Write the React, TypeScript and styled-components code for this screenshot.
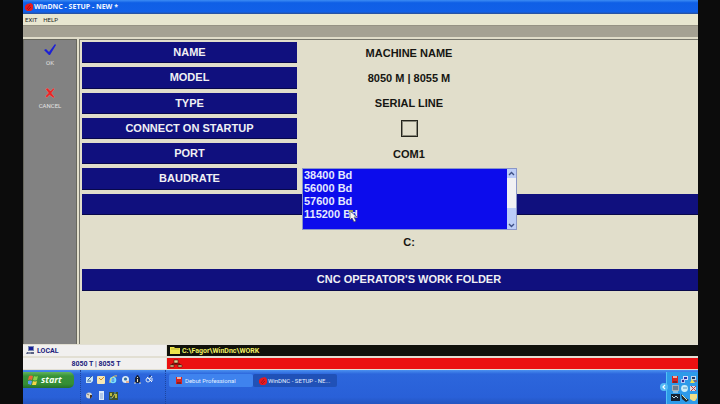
import React from "react";
import styled, { createGlobalStyle } from "styled-components";

const Global = createGlobalStyle`
  * { box-sizing: border-box; }
  html, body, #root { height: 100%; margin: 0; }
  body { background: #0c0c0c; font-family: "Liberation Sans", Arial, sans-serif; overflow: hidden; }
  button, input, select { font: inherit; margin: 0; }
  button { border: 0; padding: 0; background: none; color: inherit; }
  svg { display: block; flex: none; }
`;

const uiFont = `Roboto, "Liberation Sans", sans-serif`;

const Screen = styled.div`
  height: 100%;
  min-height: 400px;
  margin: 0 22px 0 23px;
  display: flex;
  flex-direction: column;
  background: #e1decb;
`;
const TitleBar = styled.header`
  height: 14px;
  flex: none;
  display: flex;
  align-items: center;
  gap: 1px;
  padding-left: 2px;
  background: linear-gradient(#3c8cf4, #0f5fe6 20%, #1260e8 85%, #2d4f92);
  color: #f2f6ff;
  font: bold 7px/12px "Noto Sans", sans-serif;
`;
const MenuBar = styled.nav`
  height: 11px;
  flex: none;
  display: flex;
  gap: 6px;
  padding-left: 2px;
  background: #e8e6d0;
  color: #24241e;
  font-family: ${uiFont};
  font-size: 6px;
`;
const MenuItem = styled.button`
  line-height: 9px;
`;
const ToolStrip = styled.div`
  height: 14px;
  flex: none;
  background: #a5a193;
  border-bottom: 2px solid #e0dcc9;
  border-top: 1px solid #969284;
`;
const Main = styled.main`
  flex: 1;
  min-height: 0;
  display: flex;
`;
const Sidebar = styled.aside`
  width: 54px;
  flex: none;
  display: flex;
  flex-direction: column;
  align-items: center;
  gap: 20px;
  padding-top: 4px;
  background: #828282;
  border: 1px solid #68685f;
  border-bottom: 0;
`;
const ToolButton = styled.button`
  display: flex;
  flex-direction: column;
  align-items: center;
  gap: 3px;
  color: #e2e2e2;
  font-family: ${uiFont};
  font-size: 6px;
  line-height: 8px;
`;
const Panel = styled.section`
  flex: 1;
  min-width: 0;
  margin-left: 2px;
  padding: 2px 0 3px 2px;
  border-left: 1px solid #77766c;
  border-top: 1px solid #77766c;
  display: grid;
  grid-template-columns: 215px 224px 1fr;
  grid-template-rows: repeat(12, minmax(0, 1fr));
  gap: 4px 0;
`;
const Caption = styled.div<{ $wide?: boolean }>`
  grid-column: ${p => (p.$wide ? "1 / -1" : "1")};
  display: flex;
  align-items: center;
  justify-content: center;
  padding-left: ${p => (p.$wide ? "38px" : "0")};
  background: #10107e;
  border-bottom: 1px solid #08084a;
  color: #f0f0f4;
  font-weight: bold;
  font-size: 11px;
`;
const Value = styled.div`
  grid-column: 2;
  display: flex;
  align-items: center;
  justify-content: center;
  color: #161612;
  font-weight: bold;
  font-size: 11px;
`;
const Row = styled.div`
  display: contents;
`;
const WorkDrive = styled(Value)`
  grid-row: 8 / 10;
`;
const Folder = styled(Caption)`
  grid-row: 10;
`;
const Check = styled.input`
  appearance: none;
  width: 17px;
  height: 17px;
  border: 1px solid #24241c;
  outline: 1px solid #8b8a7c;
  outline-offset: -2px;
`;
const ListAnchor = styled.div`
  grid-column: 2;
  grid-row: 6;
  position: relative;
`;
const ListBox = styled.div`
  position: absolute;
  z-index: 1;
  inset: 0 4px auto 5px;
  height: 62px;
  display: flex;
  border: 1px solid #8a96c8;
  background: #0c0cec;
`;
const Options = styled.ul`
  flex: 1;
  margin: 0;
  padding: 0 0 0 1px;
  list-style: none;
  color: #e4e8ff;
  font-weight: bold;
  font-size: 11px;
  line-height: 13px;
`;
const Scroll = styled.div`
  width: 9px;
  display: flex;
  flex-direction: column;
  justify-content: space-between;
  background: #f1f1f4;
`;
const ScrollButton = styled.button<{ $tall?: boolean }>`
  height: ${p => (p.$tall ? "21px" : "9px")};
  display: flex;
  align-items: ${p => (p.$tall ? "flex-end" : "center")};
  justify-content: center;
  background: #bccdf8;
`;
const Pointer = styled.svg`
  position: absolute;
  left: 46px;
  top: 41px;
`;
const StatusGrid = styled.footer`
  flex: none;
  display: grid;
  grid-template-columns: 143px 1fr;
  grid-template-rows: 11px 11px;
  gap: 2px 1px;
  padding: 1px 0;
  background: #e2dfd3;
  font-family: ${uiFont};
  font-weight: bold;
  font-size: 7px;
`;
const Status = styled.div<{ $tone: "light" | "black" | "red"; $center?: boolean }>`
  display: flex;
  align-items: center;
  justify-content: ${p => (p.$center ? "center" : "flex-start")};
  gap: 2px;
  padding-left: 3px;
  background: ${p => ({ light: "#f1f0ef", black: "#10110b", red: "#eb1010" })[p.$tone]};
  color: ${p => (p.$tone === "black" ? "#eeee62" : "#20207c")};
`;
const Taskbar = styled.footer`
  height: 34px;
  flex: none;
  display: flex;
  align-items: flex-start;
  background: linear-gradient(#4a90f0, #2c66dc 12%, #2960d8 80%, #2355c0);
`;
const Start = styled.button`
  width: 51px;
  height: 16px;
  margin-top: 2px;
  display: flex;
  align-items: center;
  gap: 3px;
  padding-left: 5px;
  border-radius: 0 5px 5px 0;
  background: linear-gradient(#62b45c, #389339 25%, #358f35 75%, #24702a);
  color: #f4fff0;
  font: italic bold 9px/14px "Open Sans", sans-serif;
`;
const Quick = styled.div`
  width: 86px;
  height: 34px;
  margin-left: 6px;
  padding: 5px 0 0 4px;
  border-left: 1px dotted #1c459f;
  border-right: 1px dotted #1c459f;
  display: grid;
  grid-template-columns: repeat(6, 12px);
  grid-auto-rows: 16px;
  align-content: start;
`;
const Tasks = styled.div`
  flex: 1;
  display: flex;
  padding: 4px 0 0 3px;
`;
const Task = styled.button<{ $active?: boolean }>`
  width: 84px;
  height: 13px;
  display: flex;
  align-items: center;
  gap: 1px;
  padding-left: 6px;
  border-radius: 2px;
  background: ${p => (p.$active ? "#2051b7" : "#3f83ee")};
  color: #e4efff;
  font-family: ${uiFont};
  font-size: 6px;
  white-space: nowrap;
`;
const Tray = styled.div`
  height: 34px;
  display: flex;
  align-items: center;
`;
const TrayToggle = styled.button`
  z-index: 1;
  margin-right: -2px;
`;
const TrayIcons = styled.div`
  height: 32px;
  margin-top: 2px;
  padding: 3px 0 0 4px;
  display: grid;
  grid-template-columns: repeat(3, 9px);
  grid-auto-rows: 9px;
  background: #2d9ae9;
  border-left: 1px solid #53c2f6;
`;

const RedDisc = () => (
  <svg width="8" height="8" viewBox="0 0 8 8">
    <path d="M2 1 6 0l2 2v4L6 8H2L0 6V3z" fill="#e61b20" />
    <path d="M2 6 5 2M3 7l3-3" stroke="#8e0c18" strokeWidth=".7" />
  </svg>
);
const Chevron = ({ up }: { up?: boolean }) => (
  <svg width="7" height="7" viewBox="0 0 7 7">
    <path d={up ? "M1 5 3.5 2.5 6 5" : "M1 2 3.5 4.5 6 2"} fill="none" stroke="#3d4f86" strokeWidth="1.4" />
  </svg>
);

const glyphs: Record<string, React.ReactNode> = {
  desktop: <><path d="M1 2h5l2-1v5L6 8H1z" fill="#c9e6f8" /><path d="m3 5 4-4M2 6h4" stroke="#3b6794" /></>,
  clock: <><rect x="0" y="1" width="8" height="8" rx="1" fill="#f6e6b4" /><path d="m2 3 2 2 3-3" fill="none" stroke="#d38922" /></>,
  ie: <><circle cx="4" cy="5" r="2.5" fill="none" stroke="#7ce3fc" strokeWidth="1.6" /><path d="M2 5h4" stroke="#9ceaff" /><path d="M1 8C0 4 5 0 8 1" fill="none" stroke="#f3cf58" /></>,
  player: <><circle cx="4.5" cy="4.5" r="3.5" fill="#dcebf5" /><circle cx="4.5" cy="4" r="1.6" fill="#39729d" /><path d="M5 6h3v2H5z" fill="#e5b094" /></>,
  figure: <><path d="M2 3 4 0h1l2 3v4l1 1H1l1-1z" fill="#17233c" /><path d="M4 2h1v1H4zM4 4h1v3H4z" fill="#f4e2b5" /><path d="M1 8h2M6 8h2" stroke="#e4e4dd" /></>,
  tools: <><circle cx="3" cy="5" r="2" fill="none" stroke="#d9e6f2" /><path d="m2 2 5 5M7 1 4 5M7 3v3" stroke="#ecf3fa" /><path d="M4 1h2" stroke="#1e315b" /></>,
  speaker: <><circle cx="4" cy="4.5" r="3" fill="#d8d8cf" /><path d="M5 4v4l2-2V4z" fill="#45301f" /><path d="m2 3 2 1" stroke="#877b6b" /></>,
  note: <><path d="M2 0h5v9H2z" fill="#dbeafb" /><path d="M3 3h3M3 5h3M3 7h3" stroke="#668bc5" strokeWidth=".7" /></>,
  paint: <><path d="M0 1h9v8H0z" fill="#3d5130" /><path d="M1 2h2v3H1zM6 3h2v4H6z" fill="#b9b83c" /><path d="m3 7 3-4" stroke="#cfc658" /><path d="M1 7h2M5 2h2" stroke="#55a1c2" /></>,
  cup: <><path d="M1 1h6v7H1z" fill="#d62220" /><path d="M2 1h4v2H2z" fill="#f0b0a0" /><path d="M2 7h4" stroke="#41211f" /></>,
  net: <><path d="M3 1h5v4H3z" fill="#d6ddfb" /><path d="M4 2h3v2H4z" fill="#2830a8" /><path d="M1 4h4v4H1z" fill="#b3c5f2" /><path d="M2 5h2v2H2z" fill="#372887" /></>,
  alert: <><path d="M2 1h5v4H2z" fill="#c4d4e9" /><path d="M3 2h3v2H3z" fill="#1e3b67" /><path d="m1 8 2-4 3 4z" fill="#f3dd4b" /><path d="M5 6h3" stroke="#c0382c" /></>,
  chip: <><path d="M1 1h7v6H1z" fill="#a8b0b7" /><path d="M2 2h5v4H2z" fill="#6d7c8d" /><path d="M2 8h5" stroke="#dfe5e5" /></>,
  globe: <><circle cx="4.5" cy="4.5" r="3.4" fill="#c9eefa" /><path d="M3 4h4" stroke="#5a92b8" /></>,
  cross: <><path d="M1 2h6v5H1z" fill="#ded8df" /><path d="m2 2 5 5M7 2 2 7" stroke="#bc4148" /></>,
  screen: <><path d="M0 1h9v7H0z" fill="#172131" /><path d="m1 3 2 2 2-2 2 2" fill="none" stroke="#b7d5e3" /></>,
  plug: <><path d="m1 1 3 3 5 3-3 2-4-3z" fill="#20292d" /><path d="m2 2 5 5" stroke="#e8e5a4" /></>,
  shield: <path d="M1 1h7v4L6 8H4L1 6z" fill="#f0dc86" />,
};
const Glyph = ({ name }: { name: string }) => (
  <svg width="9" height="9" viewBox="0 0 9 9">{glyphs[name]}</svg>
);

const settings = [
  { name: "NAME", value: "MACHINE NAME" },
  { name: "MODEL", value: "8050 M | 8055 M" },
  { name: "TYPE", value: "SERIAL LINE" },
  { name: "CONNECT ON STARTUP", value: null },
  { name: "PORT", value: "COM1" },
];
const rates = ["38400 Bd", "56000 Bd", "57600 Bd", "115200 Bd"];
const quick = ["desktop", "clock", "ie", "player", "figure", "tools", "speaker", "note", "paint"];
const tray = ["cup", "net", "alert", "chip", "globe", "cross", "screen", "plug", "shield"];

export default function App() {
  return (
    <>
      <Global />
      <Screen>
        <TitleBar><RedDisc />WinDNC - SETUP - NEW *</TitleBar>
        <MenuBar><MenuItem>EXIT</MenuItem><MenuItem>HELP</MenuItem></MenuBar>
        <ToolStrip />
        <Main>
          <Sidebar>
            <ToolButton>
              <svg width="13" height="12" viewBox="0 0 13 12">
                <path d="m0 6 2-1 3 3 6-8 1 1-6 10H5z" fill="#1c20d6" />
              </svg>
              OK
            </ToolButton>
            <ToolButton>
              <svg width="12" height="12" viewBox="0 0 11 12">
                <path d="m1 2 2-1 3 3 3-3 1 1-3 4 3 4-1 1-4-3-3 3-1-2 3-3z" fill="#ea2424" stroke="#f3aaaa" strokeWidth=".3" />
              </svg>
              CANCEL
            </ToolButton>
          </Sidebar>
          <Panel>
            {settings.map(s => (
              <Row key={s.name}>
                <Caption id={s.name.replace(/ /g, "-")}>{s.name}</Caption>
                <Value>{s.value ?? <Check type="checkbox" aria-labelledby="CONNECT-ON-STARTUP" />}</Value>
              </Row>
            ))}
            <Caption id="BAUDRATE">BAUDRATE</Caption>
            <ListAnchor>
              <ListBox>
                <Options role="listbox" aria-labelledby="BAUDRATE">
                  {rates.map(r => <li key={r} role="option" aria-selected="true">{r}</li>)}
                </Options>
                <Scroll>
                  <ScrollButton aria-label="Scroll up"><Chevron up /></ScrollButton>
                  <ScrollButton $tall aria-label="Scroll down"><Chevron /></ScrollButton>
                </Scroll>
                <Pointer width="9" height="13" viewBox="0 0 9 13">
                  <path d="M1 1v9l2-2 2 4 2-1-2-4h3z" fill="#f5f5f5" stroke="#33334c" strokeWidth=".6" />
                  <path d="M0 0h4v2H0z" fill="#9b985c" />
                </Pointer>
              </ListBox>
            </ListAnchor>
            <Caption $wide />
            <WorkDrive>C:</WorkDrive>
            <Folder $wide>CNC OPERATOR'S WORK FOLDER</Folder>
          </Panel>
        </Main>
        <StatusGrid>
          <Status $tone="light">
            <svg width="9" height="9" viewBox="0 0 9 9">
              <path d="M2 0h6v5H2z" fill="#7888b0" /><path d="M3 1h4v3H3z" fill="#182098" /><path d="M1 6h7v2H0z" fill="#596283" /><path d="M2 7h3" stroke="#e0e0e0" strokeWidth=".6" />
            </svg>
            LOCAL
          </Status>
          <Status $tone="black">
            <svg width="10" height="9" viewBox="0 0 10 9">
              <path d="M0 1h4l1 1h5v6H0z" fill="#eee64c" /><path d="M1 3h8" stroke="#9a922a" strokeWidth=".6" />
            </svg>
            C:\Fagor\WinDnc\WORK
          </Status>
          <Status $tone="light" $center>8050 T | 8055 T</Status>
          <Status $tone="red">
            <svg width="13" height="9" viewBox="0 0 13 9">
              <path d="M6 3v2M2 7V5h8v2" fill="none" stroke="#39100b" />
              <path d="M4 1h4v3H4zM0 6h4v2H0zM8 6h4v2H8z" fill="#e7cf91" stroke="#40180e" strokeWidth=".6" />
            </svg>
          </Status>
        </StatusGrid>
        <Taskbar>
          <Start>
            <svg width="10" height="10" viewBox="0 0 10 10">
              <path d="M1 1q2-1 4 0L4 5Q2 4 0 5z" fill="#ed6535" /><path d="M6 1q2 1 4 0L9 5Q7 6 5 5z" fill="#8bd24c" />
              <path d="M0 6q2-1 4 0L3 10Q1 9 0 9z" fill="#589af6" /><path d="M5 6q2 1 4 0L8 10Q6 11 4 10z" fill="#f6d546" />
            </svg>
            start
          </Start>
          <Quick>{quick.map(n => <Glyph key={n} name={n} />)}</Quick>
          <Tasks>
            <Task><Glyph name="cup" />Debut Professional</Task>
            <Task $active><RedDisc />WinDNC - SETUP - NE...</Task>
          </Tasks>
          <Tray>
            <TrayToggle aria-label="Show hidden icons">
              <svg width="8" height="10" viewBox="0 0 8 10">
                <circle cx="4" cy="5" r="4" fill="#55baf4" /><path d="M5 3 3 5l2 2" fill="none" stroke="#fff" strokeWidth="1.2" />
              </svg>
            </TrayToggle>
            <TrayIcons>{tray.map(n => <Glyph key={n} name={n} />)}</TrayIcons>
          </Tray>
        </Taskbar>
      </Screen>
    </>
  );
}
